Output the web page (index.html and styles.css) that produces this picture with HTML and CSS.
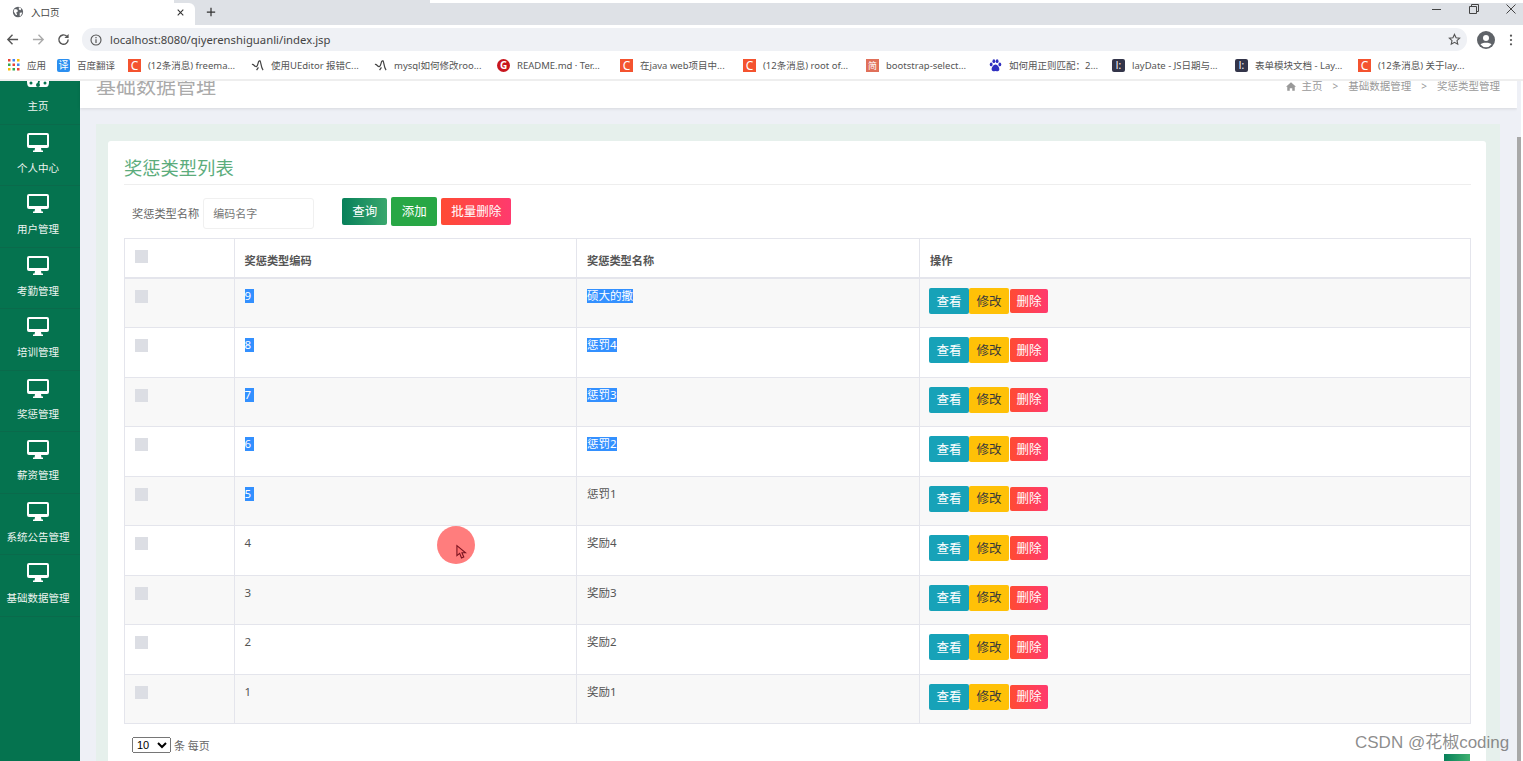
FILE: index.html
```html
<!DOCTYPE html>
<html lang="zh-CN">
<head>
    <meta charset="UTF-8">
    <title>入口页</title>
    <link rel="stylesheet" href="styles.css">
</head>
<body>
    <svg class="sprite" width="0" height="0">
        <symbol id="monitor" viewBox="0 0 22 19">
            <path fill="#fff" d="M2 0h18a2 2 0 0 1 2 2v11a2 2 0 0 1-2 2h-6l.5 2.500h1.500v1.500h-10v-1.500h1.500l.5-2.500h-6a2 2 0 0 1-2-2v-11a2 2 0 0 1 2-2zM2 2v10h18v-10z"/>
        </symbol>
        <symbol id="swirl" viewBox="0 0 14 14">
            <path fill="none" stroke="#444" stroke-width="1.300" d="M1 6c2-1 3 3 5 2s1-5 3-6 1 6 4 10M8 9l-2 3"/>
        </symbol>
    </svg>

    <!-- Browser chrome -->
    <div class="top-strip"><div class="top-strip-grey"></div></div>
    <div class="tab-bar">
        <div class="tab">
            <svg class="tab-globe" viewBox="0 0 14 14"><circle cx="7" cy="7" r="6" fill="#5f6368"/><path fill="#fff" d="M3 3.500l3 .5 1 2-2 1.500 1 3-1.500 0-2.500-4zM8 1.500l3 1.500-1 2-2-1zM9 8l3-.5-1.500 3.500-1.500 1z"/></svg>
            <span class="tab-title">入口页</span>
            <svg class="tab-close" viewBox="0 0 10 10"><path stroke="#333" stroke-width="1.500" d="M1 1l8 8M9 1l-8 8"/></svg>
        </div>
        <svg class="tab-new" viewBox="0 0 12 12"><path stroke="#333" stroke-width="1.500" d="M6 1v10M1 6h10"/></svg>
        <div class="window-controls">
            <svg viewBox="0 0 12 12"><path stroke="#444" d="M1 6.500h9"/></svg>
            <svg viewBox="0 0 12 12"><path fill="none" stroke="#444" d="M1.500 3.500h7v7h-7zM3.500 3.500v-2h7v7h-2"/></svg>
            <svg viewBox="0 0 12 12"><path stroke="#444" d="M1.500 1.500l9 9M10.500 1.500l-9 9"/></svg>
        </div>
    </div>
    <div class="toolbar">
        <svg class="nav-icon" viewBox="0 0 14 14"><path fill="none" stroke="#555" stroke-width="1.500" d="M13 7h-11M7 2l-5 5 5 5"/></svg>
        <svg class="nav-icon" viewBox="0 0 14 14"><path fill="none" stroke="#aaa" stroke-width="1.500" d="M1 7h11M7 2l5 5-5 5"/></svg>
        <svg class="nav-icon" viewBox="0 0 14 14"><path fill="none" stroke="#555" stroke-width="1.500" d="M12 7a5 5 0 1 1-1.500-3.500"/><path fill="#555" d="M12.500 1v4.500h-4.500z"/></svg>
        <div class="omnibox">
            <svg class="omni-info" viewBox="0 0 12 12"><circle cx="6" cy="6" r="5" fill="none" stroke="#555" stroke-width="1.100"/><path stroke="#555" stroke-width="1.200" d="M6 5.200v3.800M6 3v1.200"/></svg>
            <span class="omni-url">localhost:8080/qiyerenshiguanli/index.jsp</span>
            <svg class="omni-star" viewBox="0 0 14 14"><path fill="none" stroke="#555" stroke-width="1.200" d="M7 1.500l1.700 3.600 3.800.5-2.800 2.600.8 3.900-3.500-2-3.500 2 .8-3.900-2.800-2.600 3.800-.5z"/></svg>
        </div>
        <svg class="avatar" viewBox="0 0 18 18"><circle cx="9" cy="9" r="9" fill="#5f6368"/><circle cx="9" cy="7" r="3" fill="#fff"/><path fill="#fff" d="M3.500 13.500c1-2.500 10-2.500 11 0a7 7 0 0 1-11 0z"/></svg>
        <svg class="menu-dots" viewBox="0 0 4 14"><circle cx="2" cy="2" r="1.300" fill="#555"/><circle cx="2" cy="7" r="1.300" fill="#555"/><circle cx="2" cy="12" r="1.300" fill="#555"/></svg>
    </div>
    <div class="bookmarks">
        <div class="bm bm-apps">
            <svg class="fav fav-apps" viewBox="0 0 12 12">
                <rect x="0" y="0" width="2.500" height="2.500" fill="#ea4335"/><rect x="4.500" y="0" width="2.500" height="2.500" fill="#4285f4"/><rect x="9" y="0" width="2.500" height="2.500" fill="#fbbc05"/>
                <rect x="0" y="4.500" width="2.500" height="2.500" fill="#34a853"/><rect x="4.500" y="4.500" width="2.500" height="2.500" fill="#ea4335"/><rect x="9" y="4.500" width="2.500" height="2.500" fill="#4285f4"/>
                <rect x="0" y="9" width="2.500" height="2.500" fill="#fbbc05"/><rect x="4.500" y="9" width="2.500" height="2.500" fill="#34a853"/><rect x="9" y="9" width="2.500" height="2.500" fill="#ea4335"/>
            </svg>
            <span>应用</span>
        </div>
        <div class="bm bm-short"><i class="fav fav-blue">译</i><span>百度翻译</span></div>
        <div class="bm"><i class="fav fav-c">C</i><span>(12条消息) freema...</span></div>
        <div class="bm"><svg class="fav"><use href="#swirl"/></svg><span>使用UEditor 报错C...</span></div>
        <div class="bm"><svg class="fav"><use href="#swirl"/></svg><span>mysql如何修改roo...</span></div>
        <div class="bm"><i class="fav fav-g">G</i><span>README.md · Ter...</span></div>
        <div class="bm"><i class="fav fav-c">C</i><span>在java web项目中...</span></div>
        <div class="bm"><i class="fav fav-c">C</i><span>(12条消息) root of...</span></div>
        <div class="bm"><i class="fav fav-jian">简</i><span>bootstrap-select...</span></div>
        <div class="bm">
            <svg class="fav" viewBox="0 0 12 12"><g fill="#3030c0"><ellipse cx="2" cy="5" rx="1.300" ry="1.700"/><ellipse cx="4.500" cy="2" rx="1.300" ry="1.700"/><ellipse cx="7.500" cy="2" rx="1.300" ry="1.700"/><ellipse cx="10" cy="5" rx="1.300" ry="1.700"/><path d="M6 5c2 0 4 3 3.500 5s-2 1-3.500 1-3 1-3.500-1 1.500-5 3.500-5z"/></g></svg>
            <span>如何用正则匹配：2...</span>
        </div>
        <div class="bm"><i class="fav fav-lay">l:</i><span>layDate - JS日期与...</span></div>
        <div class="bm"><i class="fav fav-lay">l:</i><span>表单模块文档 - Lay...</span></div>
        <div class="bm"><i class="fav fav-c">C</i><span>(12条消息) 关于lay...</span></div>
    </div>

    <!-- Page -->
    <div class="app">
        <div class="sidebar">
            <div class="side-list">
                <a class="side-item">
                    <svg class="side-icon" viewBox="0 0 22 19"><path fill="#fff" d="M4 2h14c3 2 4 6 4 9 0 3-1 5-3 5h-16c-2 0-3-2-3-5 0-3 1-7 4-9z"/><circle cx="4" cy="12" r="1.500" fill="#05734f"/><circle cx="18" cy="12" r="1.500" fill="#05734f"/><path stroke="#05734f" stroke-width="1.800" d="M11 14l2-8"/><circle cx="11" cy="14" r="2" fill="#05734f"/></svg>
                    <span>主页</span>
                </a>
                <a class="side-item"><svg class="side-icon"><use href="#monitor"/></svg><span>个人中心</span></a>
                <a class="side-item"><svg class="side-icon"><use href="#monitor"/></svg><span>用户管理</span></a>
                <a class="side-item"><svg class="side-icon"><use href="#monitor"/></svg><span>考勤管理</span></a>
                <a class="side-item"><svg class="side-icon"><use href="#monitor"/></svg><span>培训管理</span></a>
                <a class="side-item"><svg class="side-icon"><use href="#monitor"/></svg><span>奖惩管理</span></a>
                <a class="side-item"><svg class="side-icon"><use href="#monitor"/></svg><span>薪资管理</span></a>
                <a class="side-item"><svg class="side-icon"><use href="#monitor"/></svg><span>系统公告管理</span></a>
                <a class="side-item"><svg class="side-icon"><use href="#monitor"/></svg><span>基础数据管理</span></a>
            </div>
        </div>

        <div class="content">
            <div class="page-head">
                <h2 class="page-title">基础数据管理</h2>
                <div class="crumbs">
                    <svg class="crumb-home" viewBox="0 0 12 10"><path fill="#999" d="M6 0l6 5.200h-1.500v4.800h-3v-3h-3v3h-3v-4.800h-1.500z"/></svg>
                    <span>主页</span>
                    <span class="crumb-sep">&gt;</span>
                    <span>基础数据管理</span>
                    <span class="crumb-sep">&gt;</span>
                    <span>奖惩类型管理</span>
                </div>
            </div>

            <div class="panel">
                <div class="card">
                    <h3 class="card-title">奖惩类型列表</h3>
                    <div class="search-row">
                        <label class="search-label">奖惩类型名称</label>
                        <input class="search-input" type="text" placeholder="编码名字">
                        <button class="btn btn-query">查询</button>
                        <button class="btn btn-add">添加</button>
                        <button class="btn btn-batch">批量删除</button>
                    </div>

                    <table class="data-table">
                        <thead>
                            <tr>
                                <th class="col-check"><i class="check"></i></th>
                                <th class="col-code">奖惩类型编码</th>
                                <th class="col-name">奖惩类型名称</th>
                                <th>操作</th>
                            </tr>
                        </thead>
                        <tbody>
                            <tr>
                                <td><i class="check"></i></td>
                                <td><span class="sel sel-num">9</span></td>
                                <td><span class="sel">硕大的撒</span></td>
                                <td class="actions"><button class="act act-view">查看</button><button class="act act-edit">修改</button><button class="act act-del">删除</button></td>
                            </tr>
                            <tr>
                                <td><i class="check"></i></td>
                                <td><span class="sel sel-num">8</span></td>
                                <td><span class="sel">惩罚4</span></td>
                                <td class="actions"><button class="act act-view">查看</button><button class="act act-edit">修改</button><button class="act act-del">删除</button></td>
                            </tr>
                            <tr>
                                <td><i class="check"></i></td>
                                <td><span class="sel sel-num">7</span></td>
                                <td><span class="sel">惩罚3</span></td>
                                <td class="actions"><button class="act act-view">查看</button><button class="act act-edit">修改</button><button class="act act-del">删除</button></td>
                            </tr>
                            <tr>
                                <td><i class="check"></i></td>
                                <td><span class="sel sel-num">6</span></td>
                                <td><span class="sel">惩罚2</span></td>
                                <td class="actions"><button class="act act-view">查看</button><button class="act act-edit">修改</button><button class="act act-del">删除</button></td>
                            </tr>
                            <tr>
                                <td><i class="check"></i></td>
                                <td><span class="sel sel-num">5</span></td>
                                <td>惩罚1</td>
                                <td class="actions"><button class="act act-view">查看</button><button class="act act-edit">修改</button><button class="act act-del">删除</button></td>
                            </tr>
                            <tr>
                                <td><i class="check"></i></td>
                                <td>4</td>
                                <td>奖励4</td>
                                <td class="actions"><button class="act act-view">查看</button><button class="act act-edit">修改</button><button class="act act-del">删除</button></td>
                            </tr>
                            <tr>
                                <td><i class="check"></i></td>
                                <td>3</td>
                                <td>奖励3</td>
                                <td class="actions"><button class="act act-view">查看</button><button class="act act-edit">修改</button><button class="act act-del">删除</button></td>
                            </tr>
                            <tr>
                                <td><i class="check"></i></td>
                                <td>2</td>
                                <td>奖励2</td>
                                <td class="actions"><button class="act act-view">查看</button><button class="act act-edit">修改</button><button class="act act-del">删除</button></td>
                            </tr>
                            <tr>
                                <td><i class="check"></i></td>
                                <td>1</td>
                                <td>奖励1</td>
                                <td class="actions"><button class="act act-view">查看</button><button class="act act-edit">修改</button><button class="act act-del">删除</button></td>
                            </tr>
                        </tbody>
                    </table>

                    <div class="table-foot">
                        <div class="page-size">
                            <select class="size-select"><option>10</option></select>
                            <span>条 每页</span>
                        </div>
                        <div class="page-btn"></div>
                    </div>
                </div>
            </div>
        </div>

        <div class="scrollbar"><div class="scroll-thumb"></div></div>
    </div>

    <!-- Recording overlay -->
    <div class="cursor-dot">
        <svg class="cursor-arrow" viewBox="0 0 12 16"><path fill="#ff7070" stroke="#7a1420" stroke-width="1.200" d="M1 1v11l3-2.500 2 5 2.500-1-2-4.700h4z"/></svg>
    </div>
    <div class="watermark">CSDN @花椒coding</div>
</body>
</html>
```

FILE: styles.css
```css
* {
    box-sizing: border-box;
}

html, body {
    height: 100%;
}

body {
    margin: 0;
    background-color: white;
    font-family: "Noto Sans", "Noto Sans CJK SC", sans-serif;
    color: #555;
    overflow: hidden;
}

.sprite {
    position: absolute;
}

/* Browser chrome */
.top-strip {
    height: 3px;
    background-color: white;
}

.top-strip-grey {
    width: 256px;
    height: 3px;
    margin-left: 174px;
    background-color: #dee1e6;
}

.tab-bar {
    display: flex;
    align-items: center;
    height: 22px;
    background-color: #dee1e6;
}

.tab {
    display: flex;
    align-items: center;
    width: 195px;
    height: 22px;
    padding: 0 0 4px 12px;
    background-color: white;
    border-radius: 0 6px 0 0;
}

.tab-globe {
    width: 12px;
    height: 12px;
}

.tab-title {
    margin-left: 7px;
    font-size: 9.5px;
    color: #444;
}

.tab-close {
    width: 7px;
    height: 7px;
    margin-left: auto;
    margin-right: 11px;
}

.tab-new {
    width: 10px;
    height: 10px;
    margin-left: 11px;
    margin-top: -4px;
}

.window-controls {
    display: flex;
    gap: 25px;
    margin-left: auto;
    margin-right: 6px;
    margin-top: -11px;
}

.window-controls svg {
    width: 12px;
    height: 12px;
}

.toolbar {
    display: flex;
    align-items: center;
    height: 26px;
    padding-top: 3px;
    background-color: white;
}

.nav-icon {
    width: 13px;
    height: 13px;
    margin-left: 6px;
    margin-right: 6px;
}

.toolbar .nav-icon:first-child {
    margin-right: 7px;
}

.omnibox {
    display: flex;
    align-items: center;
    width: 1385px;
    height: 23px;
    margin-left: 6px;
    padding: 0 6px 0 8px;
    background-color: #eff1f5;
    border-radius: 11px;
}

.omni-info {
    width: 12px;
    height: 12px;
}

.omni-url {
    margin-left: 8px;
    font-size: 11.3px;
    color: #444;
}

.omni-star {
    width: 13px;
    height: 13px;
    margin-left: auto;
}

.avatar {
    width: 18px;
    height: 18px;
    margin-left: 10px;
}

.menu-dots {
    width: 4px;
    height: 12px;
    margin-left: 14px;
}

.bookmarks {
    display: flex;
    align-items: center;
    height: 30px;
    padding-left: 8px;
    background-color: white;
    border-bottom: 2px solid #eeeeee;
    font-size: 9.5px;
    color: #555;
}

.bm {
    display: flex;
    align-items: center;
    flex: none;
    width: 123px;
    white-space: nowrap;
}

.bm-apps {
    width: 49px;
}

.bm-short {
    width: 71px;
}

.bm span {
    margin-left: 7px;
}

.fav {
    display: flex;
    align-items: center;
    justify-content: center;
    flex: none;
    width: 13px;
    height: 13px;
    font-style: normal;
    font-size: 10px;
    line-height: 13px;
    color: white;
}

.fav-apps {
    width: 12px;
    height: 12px;
}

.fav-blue {
    background-color: #2b8ff0;
    border-radius: 2px;
}

.fav-c {
    background-color: #f4532f;
    font-size: 12px;
}

.fav-g {
    background-color: #c8161e;
    border-radius: 50%;
    font-weight: bold;
}

.fav-jian {
    background-color: #e0705a;
    font-size: 9px;
}

.fav-lay {
    background-color: #33354a;
    border-radius: 2px;
}

/* Layout below the chrome */
.app {
    display: flex;
    height: 680px;
    overflow: hidden;
}

/* Sidebar */
.sidebar {
    flex: none;
    width: 80px;
    background-color: #05734f;
    overflow: hidden;
}

.side-list {
    margin-top: -18px;
    padding-right: 4px;
}

.side-item {
    display: flex;
    flex-direction: column;
    align-items: center;
    height: 61.5px;
    margin-right: -4px;
    padding-top: 8px;
    padding-right: 4px;
    border-bottom: 1px solid #0a6a4b;
    color: #eef5f1;
    font-size: 10.5px;
    white-space: nowrap;
}

.side-icon {
    flex: none;
    width: 22px;
    height: 19px;
}

.side-item span {
    margin-top: 8px;
    line-height: 16px;
}

/* Main content */
.content {
    flex: 1;
    min-width: 0;
    background-color: #eef0f6;
}

.page-head {
    display: flex;
    justify-content: space-between;
    height: 27px;
    padding: 0 17px 0 16px;
    background-color: white;
    box-shadow: 0 1px 3px rgba(0, 0, 0, 0.1);
}

/* the page is scrolled a little, so the chrome cuts the top of the title */
.page-title {
    margin: 0;
    height: 27px;
    overflow: hidden;
    font-size: 20px;
    font-weight: normal;
    line-height: 12px;
    color: #aaa;
}

.crumbs {
    display: flex;
    align-items: center;
    gap: 6px;
    height: 11px;
    font-size: 10.5px;
    line-height: 11px;
    color: #999;
}

.crumb-home {
    width: 10px;
    height: 9px;
}

.crumb-sep {
    margin: 0 4px;
    font-size: 10px;
}

.panel {
    margin: 16px 17px 0 16px;
    padding: 17px 14px 0 12px;
    background-color: #e6f0ec;
}

.card {
    padding: 15px 15px 15px 16px;
    height: 640px;
    background-color: white;
    border-radius: 3px;
}

.card-title {
    margin: 0;
    height: 29px;
    border-bottom: 1px solid #eeeeee;
    font-size: 18.3px;
    font-weight: normal;
    line-height: 24px;
    color: #5cac7c;
}

.search-row {
    display: flex;
    align-items: center;
    height: 31px;
    margin-top: 13px;
    padding-left: 8px;
}

.search-label {
    margin-top: -2px;
    font-size: 11.2px;
    color: #666;
}

.search-input {
    width: 111px;
    height: 31px;
    margin-left: 4px;
    padding: 0 9px;
    border: 1px solid #f0f0f0;
    border-radius: 3px;
    font-family: inherit;
    font-size: 11px;
}

.search-input::placeholder {
    color: #777;
}

.btn {
    height: 27px;
    margin-top: -5px;
    padding: 0 0 2px;
    border: none;
    border-radius: 2px;
    font-family: inherit;
    font-size: 12.5px;
    color: white;
}

.btn-query {
    width: 45px;
    margin-left: 28px;
    background: linear-gradient(to right, #07805a, #3aa76d);
}

.btn-add {
    width: 46px;
    height: 29px;
    margin-left: 4px;
    background-color: #28a745;
}

.btn-batch {
    width: 70px;
    margin-left: 4px;
    background: linear-gradient(to right, #ff4b33, #ff3a6e);
}

/* Table */
.data-table {
    width: 100%;
    margin-top: 9px;
    border-collapse: collapse;
    table-layout: fixed;
    font-size: 11.5px;
    color: #555;
}

.data-table th,
.data-table td {
    padding: 10px;
    border: 1px solid #e4e5ec;
    text-align: left;
    vertical-align: top;
}

.data-table th {
    height: 38px;
    padding-top: 14px;
    padding-bottom: 9px;
    border-bottom-width: 2px;
    font-size: 11.2px;
    font-weight: bold;
    line-height: 15px;
    color: #555;
}

.data-table td {
    height: 49.5px;
    line-height: 14px;
}

.data-table tbody tr:nth-child(odd) {
    background-color: #f8f8f8;
}

.col-check {
    width: 109.500px;
}

.col-code {
    width: 342.500px;
}

.col-name {
    width: 343px;
}

.data-table th.col-check {
    padding-top: 9px;
}

.check {
    display: block;
    width: 13px;
    height: 13px;
    margin-top: 1px;
    background-color: #dcdee4;
}

.data-table th .check {
    margin-top: 2px;
}

.sel {
    display: inline-block;
    background-color: #3390ff;
    color: white;
}

.sel-num {
    padding-right: 3px;
}

.data-table td.actions {
    padding: 9px 0 0 9px;
    white-space: nowrap;
}

.act {
    width: 40px;
    height: 26px;
    padding: 0 0 2px;
    border: none;
    border-radius: 2px;
    font-family: inherit;
    font-size: 12.5px;
    vertical-align: top;
}

.act-view {
    background-color: #17a2b8;
    color: white;
}

.act-edit {
    background-color: #ffc107;
    color: #3a3a3a;
}

.act-del {
    width: 38px;
    height: 24px;
    margin-top: 1px;
    margin-left: 1px;
    background: linear-gradient(to right, #ff4b33, #ff3a6e);
    color: white;
}

.table-foot {
    display: flex;
    justify-content: space-between;
    align-items: flex-start;
    padding-left: 8px;
}

.page-size {
    display: flex;
    align-items: center;
    gap: 3px;
    margin-top: 13px;
    font-size: 11px;
    color: #666;
}

.size-select {
    width: 39px;
    height: 16px;
    padding: 0;
    font-family: "Liberation Sans", sans-serif;
    font-size: 11px;
}

.page-btn {
    width: 26px;
    height: 30px;
    margin-top: 30px;
    margin-right: 1px;
    background: linear-gradient(to right, #07805a, #3fb070);
}

/* Scrollbar */
.scrollbar {
    flex: none;
    width: 6px;
    padding-top: 56px;
    padding-right: 2px;
    background: linear-gradient(to right, #eef0f6 4px, white 4px);
}

.scroll-thumb {
    height: 100%;
    background-color: #a8a8a8;
}

/* Overlays from the screen recorder */
.cursor-dot {
    position: absolute;
    left: 437px;
    top: 526px;
    width: 38px;
    height: 38px;
    border-radius: 50%;
    background-color: rgba(255, 70, 70, 0.7);
}

.cursor-arrow {
    position: absolute;
    left: 19px;
    top: 18px;
    width: 11px;
    height: 16px;
}

.watermark {
    position: absolute;
    left: 1355px;
    top: 731px;
    font-family: "Liberation Sans", "Noto Sans CJK SC", sans-serif;
    font-size: 17px;
    line-height: 24px;
    color: rgba(90, 90, 90, 0.7);
    white-space: nowrap;
}
```
